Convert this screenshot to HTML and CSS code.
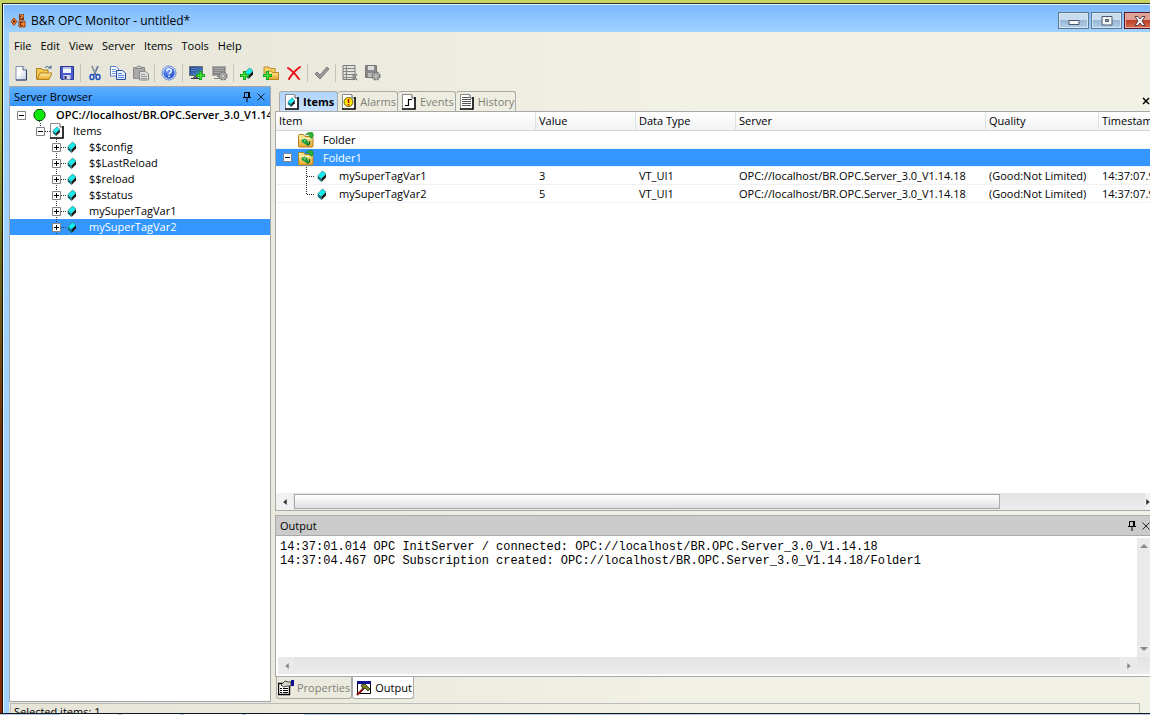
FILE: index.html
```html
<!DOCTYPE html>
<html lang="en">
<head>
<meta charset="utf-8">
<title>B&amp;R OPC Monitor - untitled*</title>
<link rel="stylesheet" href="styles.css">
</head>
<body>
<svg class="defs" aria-hidden="true">
  <defs>
    <linearGradient id="gold" x1="0" y1="0" x2="0" y2="1"><stop offset="0" stop-color="#fff0a0"/><stop offset="1" stop-color="#e5a72c"/></linearGradient>
    <linearGradient id="paper" x1="0" y1="0" x2="1" y2="1"><stop offset="0.4" stop-color="#fff"/><stop offset="1" stop-color="#b9c6e2"/></linearGradient>
    <linearGradient id="screen" x1="0" y1="0" x2="1" y2="1"><stop offset="0" stop-color="#16357c"/><stop offset="1" stop-color="#5aa0dc"/></linearGradient>
    <radialGradient id="ball" cx="0.4" cy="0.3" r="0.8"><stop offset="0" stop-color="#74a4ff"/><stop offset="1" stop-color="#123fba"/></radialGradient>
  </defs>
  <symbol id="cube" viewBox="0 0 10 12">
    <path d="M1 5.500L5.500 1 9 4 4.500 8.500z" fill="#12eef0"/><path d="M1 5.500l3.500 3V12L1 9z" fill="#087f88"/><path d="M4.500 8.500L9 4v3.500L4.500 12z" fill="#1c1c1c"/><path d="M1 5.500L5.500 1 9 4M1 5.500V9" fill="none" stroke="#30777c" stroke-width=".7"/>
  </symbol>
  <symbol id="page" viewBox="0 0 14 16">
    <path d="M1 1h9l3 3v11H1z" fill="#fff"/><path d="M.5 15V.5H10" fill="none" stroke="#8b8b8b"/><path d="M10 1v3h3" fill="none" stroke="#555"/><path d="M13 3v12H0" fill="none" stroke="#000" stroke-width="1.600"/>
  </symbol>
  <symbol id="itempage" viewBox="0 0 14 16"><use href="#page" width="14" height="16"/><use href="#cube" x="2" y="3" width="9" height="10"/></symbol>
  <symbol id="pin" viewBox="0 0 8 10">
    <path d="M1.500 5.500v-5h5v5M0 5.500h8M4 6v4" fill="none" stroke="currentColor"/><path d="M5 0h2v6H5z" fill="currentColor"/>
  </symbol>
  <symbol id="cross" viewBox="0 0 8 8"><path d="M.5.5l7 7M7.500.5l-7 7" fill="none" stroke="currentColor" stroke-width=".8"/></symbol>
  <symbol id="plus" viewBox="0 0 9 9"><path d="M3 0h3v3h3v3H6v3H3V6H0V3h3z" fill="#0c9a1a"/><path d="M4 1h1v3h3v1H5v3H4V5H1V4h3z" fill="#5cf04a" stroke="#35d42e" stroke-width=".7"/></symbol>
  <symbol id="gear" viewBox="0 0 10 10"><circle cx="5" cy="5" r="3.600" fill="#aaa" stroke="#777" stroke-width="2" stroke-dasharray="2 .83"/><circle cx="5" cy="5" r="3" fill="#aaa"/><circle cx="5" cy="5" r="1.400" fill="#eee" stroke="#777" stroke-width=".6"/></symbol>
  <symbol id="folder" viewBox="0 0 16 16">
    <path d="M.5 3.500q0-1 1-1h4l1.500 2H14q1 0 1 1V14q0 1-1 1H1.500q-1 0-1-1z" fill="url(#gold)" stroke="#b87d1c"/>
    <path d="M1 6.500h13.500" stroke="#fff5c0"/><path d="M3.500 8l3-1.500L9 8l2 4-1.500 1.500L4 10z" fill="#169a3c"/><path d="M5 8l2-.5 1 1.500-1 1z" fill="#7fd68a"/><path d="M9 13.500q3.500-1 2.500-4.500" fill="none" stroke="#126f2c" stroke-width="1.300"/><path d="M7.500 3q1.500-3 5-2.500L14 0l1.500 3L14 6.500 11.500 5l.5-1.500Q10 2 7.500 3z" fill="#2fb42f" stroke="#157c24" stroke-width=".6"/>
  </symbol>
  <symbol id="minusbox" viewBox="0 0 9 9"><path d="M.5.5h8v8h-8z" fill="#fff" stroke="#848484"/><path d="M2 4.500h5" stroke="#000"/></symbol>
  <symbol id="branch" viewBox="0 0 14 16">
    <path d="M4.500 0v16M9 8.500h5" fill="none" stroke="#333" stroke-dasharray="1 1"/><path d="M.5 4.500h8v8h-8z" fill="#fff" stroke="#848484"/><path d="M2 8.500h5M4.500 6v5" stroke="#000"/>
  </symbol>
  <symbol id="arrow" viewBox="0 0 5 8"><path d="M5 0v8L0 4z" fill="currentColor"/></symbol>
</svg>

<div class="window">
  <header class="titlebar">
    <svg class="i16" viewBox="0 0 16 16"><path d="M3 5l3 3.500-3 4-3-4z" fill="#e3742d" stroke="#a34a15"/><circle cx="3" cy="8.500" r="1" fill="#402010"/><path d="M8 1h5v6H8z" fill="#7b3511"/><path d="M9 2h3v2h-2v2" fill="none" stroke="#fb9e55"/><path d="M8 8h6v6H8z" fill="#f18a3a" stroke="#984313"/><path d="M12 9.500H9.500v3H12" fill="none" stroke="#612a0b"/></svg>
    <h1 class="title">B&amp;R OPC Monitor - untitled*</h1>
    <div class="winbuttons">
      <button class="winbtn" aria-label="Minimize"><svg width="12" height="8" viewBox="0 0 12 8"><path d="M1 3.500h10v4H1z" fill="#f5f5f5" stroke="#4c566b"/></svg></button>
      <button class="winbtn" aria-label="Maximize"><svg width="12" height="10" viewBox="0 0 12 10"><path d="M1 .5h10v8.500H1z" fill="#f5f5f5" stroke="#4c566b"/><path d="M4.500 3.500h3v2h-3z" fill="#88a8c8" stroke="#4c566b"/></svg></button>
      <button class="winbtn close" aria-label="Close"><svg width="12" height="10" viewBox="0 0 12 10"><path d="M1 .5h3l2 2.500L8 .5h3L8 5l3 4.500H8L6 7 4 9.500H1L4 5z" fill="#f5f5f5" stroke="#563c46"/></svg></button>
    </div>
  </header>

  <div class="client">
    <nav class="menu">
      <button>File</button><button>Edit</button><button>View</button><button>Server</button><button>Items</button><button>Tools</button><button>Help</button>
    </nav>

    <div class="toolbar" role="toolbar">
      <button aria-label="New"><svg class="i16" viewBox="0 0 16 16"><path d="M3 1.500h7l3.500 3.500v10H3z" fill="url(#paper)" stroke="#8290ae"/><path d="M13.500 5v10H3" fill="none" stroke="#2e3c60"/><path d="M10 1.500V5h3.500" fill="#fff" stroke="#46557a"/></svg></button>
      <button aria-label="Open"><svg class="i16" viewBox="0 0 16 16"><path d="M.5 14V3.500h5L7 5h5v9z" fill="#f4c851" stroke="#a87d20"/><path d="M1 14.500L4 8h12l-3 6.500z" fill="url(#gold)" stroke="#b5821c"/><path d="M9 2.500q3-2.500 5 .5" fill="none" stroke="#47688f"/><path d="M12 3.500h3.500V0z" fill="#47688f"/></svg></button>
      <button aria-label="Save"><svg class="i16" viewBox="0 0 16 16"><path d="M1.500 1.500h13v13h-12l-1-1z" fill="#4b5bd0" stroke="#2b318f"/><path d="M4 2h8v6H4z" fill="#f3f5ff"/><path d="M4 2h8v2H4z" fill="#b8c0ee"/><path d="M4.500 10h7v4.500h-7z" fill="#d4d6e2"/><path d="M5.500 11h2v3h-2z" fill="#24266b"/></svg></button>
      <span class="sep"></span>
      <button aria-label="Cut"><svg class="i16" viewBox="0 0 16 16"><path d="M5 1l4 9M11 1L7 10" fill="none" stroke="#62738b" stroke-width="1.700"/><path d="M5.500 1.500l3 6" stroke="#dce5ef" stroke-width=".6"/><ellipse cx="5" cy="12" rx="2" ry="2.500" fill="none" stroke="#2052ba" stroke-width="1.500"/><ellipse cx="11" cy="12" rx="2" ry="2.500" fill="none" stroke="#2052ba" stroke-width="1.500"/></svg></button>
      <button aria-label="Copy"><svg class="i16" viewBox="0 0 16 16"><path d="M.5 1.500H6L8.500 4v7h-8z" fill="#fff" stroke="#577bc0"/><path d="M2 4.500h4M2 6.500h4M2 8.500h4" stroke="#799be0"/><path d="M6.500 5.500h6L15.500 8v6.500h-9z" fill="#e9f1ff" stroke="#244e9c"/><path d="M8 8.500h4M8 10.500h6M8 12.500h6" stroke="#5784d8"/></svg></button>
      <button aria-label="Paste"><svg class="i16" viewBox="0 0 16 16"><path d="M.5 2.500h11v11H.5z" fill="#a9a9a9" stroke="#888"/><path d="M3 3.500V2h2l1-1.500L7 2h2v1.500z" fill="#ddd" stroke="#888"/><path d="M6.500 6.500h6L15.500 9v6h-9z" fill="#ddd" stroke="#888"/><path d="M8 9.500h4M8 11.500h6M8 13.500h6" stroke="#999"/></svg></button>
      <span class="sep"></span>
      <button aria-label="Help"><svg class="i16" viewBox="0 0 16 16"><circle cx="8" cy="8" r="7" fill="#e5eeff" stroke="#6388d4"/><circle cx="8" cy="8" r="5.700" fill="url(#ball)"/><path d="M5.700 6.300q0-2.300 2.300-2.300t2.300 2q0 1.200-1.300 1.800-.9.500-.9 1.500" fill="none" stroke="#fff" stroke-width="1.400"/><circle cx="8" cy="11.300" r=".9" fill="#fff"/></svg></button>
      <span class="sep"></span>
      <button aria-label="Add server"><svg class="i16" viewBox="0 0 16 16"><path d="M.5 1.500h13v9H.5z" fill="url(#screen)" stroke="#64707c"/><path d="M2 3.500h6M2 5.500h4" stroke="#5e86c8"/><path d="M5 11h4v2H4z" fill="#5e6871"/><path d="M2 13.500h9" stroke="#333"/><use href="#plus" x="7" y="6" width="9" height="9"/></svg></button>
      <button aria-label="Server settings"><svg class="i16" viewBox="0 0 16 16"><path d="M.5 1.500h13v9H.5z" fill="#858585" stroke="#aaa"/><path d="M2 3.500h10M2 5.500h10M2 7.500h10" stroke="#a9a9a9"/><path d="M2 13.500h8M5 11.500h3" stroke="#888"/><use href="#gear" x="6" y="6" width="10" height="10"/></svg></button>
      <span class="sep"></span>
      <button aria-label="Add item"><svg class="i16" viewBox="0 0 16 16"><use href="#cube" x="4" y="2" width="10" height="12"/><use href="#plus" x="0" y="6" width="9" height="9"/></svg></button>
      <button aria-label="Add folder"><svg class="i16" viewBox="0 0 16 16"><path d="M1 6V2h5l1 1.500h5V8H1z" fill="#f7d463" stroke="#ba8725"/><path d="M4.500 6h4l1 1.500h6v7h-11z" fill="url(#gold)" stroke="#ba8725"/><use href="#plus" x="0" y="6" width="9" height="9"/></svg></button>
      <button aria-label="Delete"><svg class="i16" viewBox="0 0 16 16"><path d="M2 3q5 3 11 11M14 2Q7 7 3 14" fill="none" stroke="#e81212" stroke-width="2" stroke-linecap="round"/></svg></button>
      <span class="sep"></span>
      <button aria-label="Validate"><svg class="i16" viewBox="0 0 16 16"><path d="M1 9l2-2 3 3 7-8 2 2-9 10z" fill="#999" stroke="#7d7d7d"/></svg></button>
      <span class="sep"></span>
      <button aria-label="Clear log"><svg class="i16" viewBox="0 0 16 16"><path d="M1 .5h12v14H1z" fill="#e3e3df" stroke="#777"/><path d="M1 3.500h12M1 6.500h12M1 9.500h12M1 12.500h12M4.500 0v15" stroke="#858585"/><path d="M10 9l5 6M15 9l-5 6" stroke="#888" stroke-width="1.600"/></svg></button>
      <button aria-label="Log settings"><svg class="i16" viewBox="0 0 16 16"><path d="M.5.5h11v12H.5z" fill="#898989" stroke="#777"/><path d="M3 1h6v4H3z" fill="#ddd"/><path d="M3 8h6v4H3z" fill="#bbb"/><use href="#gear" x="6" y="6" width="10" height="10"/></svg></button>
    </div>

    <div class="workspace">
      <aside class="browser">
        <div class="caption active">
          <h2>Server Browser</h2>
          <button aria-label="Pin"><svg width="8" height="10"><use href="#pin"/></svg></button>
          <button aria-label="Close panel"><svg width="8" height="8"><use href="#cross"/></svg></button>
        </div>
        <ul class="tree" role="tree">
          <li class="node root" role="treeitem"><svg width="9" height="9"><use href="#minusbox"/></svg><svg width="14" height="16" viewBox="0 0 14 16"><path d="M7.500 14v2" stroke="#333" stroke-dasharray="1 1"/><path d="M5 2.500h5L13 6v4l-3 3.500H5L2 10V6z" fill="#0bea0b" stroke="#174e17"/></svg><strong>OPC://localhost/BR.OPC.Server_3.0_V1.14</strong></li>
          <li class="node group" role="treeitem"><svg width="14" height="16" viewBox="0 0 14 16"><path d="M4.500 0v4M9 8.500h5" stroke="#333" stroke-dasharray="1 1"/><path d="M.5 4.500h8v8h-8z" fill="#fff" stroke="#848484"/><path d="M2 8.500h5" stroke="#000"/></svg><svg width="14" height="16"><use href="#itempage"/></svg><span>Items</span></li>
          <li class="node leaf" role="treeitem"><svg width="14" height="16"><use href="#branch"/></svg><svg width="12" height="12"><use href="#cube"/></svg><span>$$config</span></li>
          <li class="node leaf" role="treeitem"><svg width="14" height="16"><use href="#branch"/></svg><svg width="12" height="12"><use href="#cube"/></svg><span>$$LastReload</span></li>
          <li class="node leaf" role="treeitem"><svg width="14" height="16"><use href="#branch"/></svg><svg width="12" height="12"><use href="#cube"/></svg><span>$$reload</span></li>
          <li class="node leaf" role="treeitem"><svg width="14" height="16"><use href="#branch"/></svg><svg width="12" height="12"><use href="#cube"/></svg><span>$$status</span></li>
          <li class="node leaf" role="treeitem"><svg width="14" height="16"><use href="#branch"/></svg><svg width="12" height="12"><use href="#cube"/></svg><span>mySuperTagVar1</span></li>
          <li class="node leaf selected" role="treeitem" aria-selected="true"><svg width="14" height="16"><use href="#branch"/></svg><svg width="12" height="12"><use href="#cube"/></svg><span>mySuperTagVar2</span></li>
        </ul>
      </aside>

      <main class="main">
        <div class="tabrow">
          <div class="tabs" role="tablist">
            <button class="tab current" role="tab" aria-selected="true"><svg width="14" height="16"><use href="#itempage"/></svg>Items</button>
            <button class="tab" role="tab"><svg width="14" height="16" viewBox="0 0 14 16"><use href="#page" width="14" height="16"/><circle cx="6.500" cy="8" r="4.500" fill="#ffea00" stroke="#6a5a00"/><path d="M6.500 5v4M6.500 10v1.500" stroke="#d00" stroke-width="1.600"/></svg>Alarms</button>
            <button class="tab" role="tab"><svg width="14" height="16" viewBox="0 0 14 16"><use href="#page" width="14" height="16"/><path d="M3 11.500h3.500v-6H10" fill="none" stroke="#000" stroke-width="1.200"/></svg>Events</button>
            <button class="tab" role="tab"><svg width="14" height="16" viewBox="0 0 14 16"><use href="#page" width="14" height="16"/><path d="M2 3.500h7M2 5.500h9M2 7.500h9M2 9.500h9M2 11.500h9" stroke="#555"/></svg>History</button>
          </div>
          <button class="tabclose" aria-label="Close view"><svg width="8" height="8" viewBox="0 0 8 8"><path d="M1 1l6 6M7 1L1 7" stroke="#000" stroke-width="1.500"/></svg></button>
        </div>

        <section class="items">
          <div class="tablewrap">
            <table>
              <colgroup><col class="c-item"><col class="c-small"><col class="c-small"><col class="c-server"><col class="c-quality"><col></colgroup>
              <thead><tr><th>Item</th><th>Value</th><th>Data Type</th><th>Server</th><th>Quality</th><th>Timestamp</th></tr></thead>
              <tbody>
                <tr><td><div class="cell folder"><span class="twisty"></span><svg class="i16"><use href="#folder"/></svg>Folder</div></td><td></td><td></td><td></td><td></td><td></td></tr>
                <tr class="selected"><td><div class="cell folder"><svg class="twisty"><use href="#minusbox"/></svg><svg class="i16"><use href="#folder"/></svg>Folder1</div></td><td></td><td></td><td></td><td></td><td></td></tr>
                <tr><td><div class="cell child"><svg width="9" height="18" viewBox="0 0 9 18"><path d="M.5 0v18M1 9.500h8" stroke="#222" stroke-dasharray="1 1"/></svg><svg width="12" height="12"><use href="#cube"/></svg>mySuperTagVar1</div></td><td>3</td><td>VT_UI1</td><td>OPC://localhost/BR.OPC.Server_3.0_V1.14.18</td><td>(Good:Not Limited)</td><td>14:37:07.9</td></tr>
                <tr><td><div class="cell child"><svg width="9" height="18" viewBox="0 0 9 18"><path d="M.5 0v9M1 9.500h8" stroke="#222" stroke-dasharray="1 1"/></svg><svg width="12" height="12"><use href="#cube"/></svg>mySuperTagVar2</div></td><td>5</td><td>VT_UI1</td><td>OPC://localhost/BR.OPC.Server_3.0_V1.14.18</td><td>(Good:Not Limited)</td><td>14:37:07.9</td></tr>
              </tbody>
            </table>
          </div>
          <div class="hscroll">
            <button aria-label="Scroll left"><svg width="4" height="6" viewBox="0 0 5 8"><use href="#arrow"/></svg></button>
            <div class="track"><div class="thumb"></div></div>
            <button class="edge" aria-label="Scroll right"><svg class="flip" width="4" height="6" viewBox="0 0 5 8"><use href="#arrow"/></svg></button>
          </div>
        </section>

        <section class="output">
          <div class="caption">
            <h2>Output</h2>
            <button aria-label="Pin"><svg width="8" height="10"><use href="#pin"/></svg></button>
            <button aria-label="Close panel"><svg width="8" height="8"><use href="#cross"/></svg></button>
          </div>
          <div class="logbody">
            <div class="log"><p>14:37:01.014 OPC InitServer / connected: OPC://localhost/BR.OPC.Server_3.0_V1.14.18</p><p>14:37:04.467 OPC Subscription created: OPC://localhost/BR.OPC.Server_3.0_V1.14.18/Folder1</p></div>
            <div class="vscroll">
              <button aria-label="Scroll up"><svg width="8" height="4" viewBox="0 0 8 4"><path d="M0 4h8L4 0z" fill="#888"/></svg></button>
              <button aria-label="Scroll down"><svg width="8" height="4" viewBox="0 0 8 4"><path d="M0 0h8L4 4z" fill="#888"/></svg></button>
            </div>
          </div>
          <div class="hscroll off">
            <button aria-label="Scroll left"><svg width="4" height="6" viewBox="0 0 5 8"><use href="#arrow"/></svg></button>
            <div class="track"></div>
            <button aria-label="Scroll right"><svg class="flip" width="4" height="6" viewBox="0 0 5 8"><use href="#arrow"/></svg></button>
          </div>
        </section>

        <div class="bottomtabs" role="tablist">
          <button class="btab" role="tab"><svg class="i16" viewBox="0 0 16 16"><path d="M.5 3.500h11v11H.5z" fill="#fff" stroke="#000" stroke-width="1.400"/><path d="M2 8.500h2M5 8.500h5M2 10.500h2M5 10.500h5M2 12.500h2M5 12.500h5" stroke="#000"/><path d="M3 5l4-4 3 1h3v4H9L6 7z" fill="#d8d8c8" stroke="#444"/><path d="M13 0h3v6h-3z" fill="#101090"/></svg>Properties</button>
          <button class="btab current" role="tab" aria-selected="true"><svg class="i16" viewBox="0 0 16 16"><path d="M1.500 1.500h13v12h-13z" fill="#fff" stroke="#000"/><path d="M1 1h14v3H1z" fill="#101090"/><path d="M1 15l7-7" stroke="#8c1010" stroke-width="2.200"/><path d="M5 5l4-1 5 5-2 2-3-3-2 1z" fill="#7e8214" stroke="#222" stroke-width=".8"/></svg>Output</button>
        </div>
      </main>
    </div>

    <footer class="status"><div class="statuscell">Selected items: 1</div></footer>
  </div>
</div>
<div class="taskbar"><span></span><span></span><span></span><span></span></div>
</body>
</html>
```
FILE: styles.css
```css
* { box-sizing: border-box; }

body {
  margin: 0;
  height: 100vh;
  overflow: hidden;
  display: flex;
  flex-direction: column;
  padding-top: 3px;
  background: linear-gradient(#c8d564 0, #b2bd4d 15%, #6c6d20 35%, #74320c 60%, #8a2805 100%);
  font-family: "Open Sans", "Noto Sans", sans-serif;
  font-size: 11px;
  line-height: 16px;
  color: #000;
}

button {
  margin: 0;
  padding: 0;
  border: 0;
  background: none;
  font: inherit;
  color: inherit;
}

h1, h2, p, ul { margin: 0; padding: 0; font-size: inherit; font-weight: normal; }
svg { display: block; flex: none; }
.defs { position: absolute; width: 0; height: 0; }
.i16 { width: 16px; height: 16px; }
.flip { transform: scaleX(-1); }

.window {
  flex: 1;
  min-height: 0;
  margin-left: 2px;
  display: flex;
  flex-direction: column;
  border-top: 1px solid #2a3020;
  border-left: 1px solid #10140c;
  background: #a0d2ff;
  box-shadow: inset 1px 1px 0 #e8f5ff;
}

.titlebar {
  flex: none;
  height: 27px;
  display: flex;
  align-items: center;
  gap: 4px;
  margin: 1px 0 0 1px;
  padding: 4px 0 0 7px;
  overflow: hidden;
  background: linear-gradient(#7cb8fc, #a0d2ff);
}
.title { flex: 1; font-size: 12px; }
.winbuttons { display: flex; gap: 2px; margin-right: -5px; }
.winbtn {
  width: 31px;
  height: 17px;
  display: grid;
  place-items: center;
  border: 1px solid #5f7690;
  background: linear-gradient(#c8dcee 50%, #97b7d4 50%, #b2d0ea);
  box-shadow: inset 0 0 0 1px #d5e6f5;
}
.winbtn.close {
  border-color: #581c26;
  background: linear-gradient(#e0a095 50%, #bd3f26 50%, #d66b50);
  box-shadow: inset 0 0 0 1px #e6a99f;
}

.client {
  flex: 1;
  min-height: 0;
  margin-left: 6px;
  display: flex;
  flex-direction: column;
  background: linear-gradient(90deg, #e5e4d7, #f2f1e5 60%);
}

.menu { flex: none; height: 28px; display: flex; align-items: center; gap: 9px; padding-left: 5px; }

.toolbar { flex: none; height: 26px; display: flex; align-items: center; }
.toolbar button { width: 23px; height: 23px; display: grid; place-items: center; }
.sep { width: 1px; height: 18px; margin: 0 2px; background: #c5c4ba; }

.workspace { flex: 1; min-height: 0; display: flex; gap: 4px; }

.browser {
  flex: none;
  width: 262px;
  display: flex;
  flex-direction: column;
  border: 1px solid #a5a5a5;
  background: #fff;
  overflow: hidden;
}
.caption {
  flex: none;
  height: 20px;
  display: flex;
  align-items: center;
  gap: 6px;
  padding: 0 5px 0 4px;
  border-bottom: 1px solid #aaa;
  background: #cbcbcb;
}
.caption h2 { flex: 1; }
.caption.active { height: 19px; border-bottom: 0; background: linear-gradient(#5fb0ff, #3395fb); }

.tree { list-style: none; padding-top: 1px; }
.node { height: 16px; display: flex; align-items: center; white-space: nowrap; }
.root { padding-left: 7px; }
.root svg + svg { margin: 0 10px 0 6px; }
.root strong { font-weight: 600; }
.group { padding-left: 26px; }
.group span { margin-left: 9px; }
.leaf { padding-left: 42px; }
.leaf span { margin-left: 11px; }
.selected { background: #3397ff; color: #fff; }

.main { flex: 1; min-width: 0; display: flex; flex-direction: column; overflow: hidden; }
.tabrow { flex: none; height: 25px; display: flex; align-items: flex-end; justify-content: space-between; padding-left: 4px; }
.tabs { display: flex; }
.tab {
  height: 20px;
  display: flex;
  align-items: center;
  gap: 4px;
  padding: 0 1px 0 4px;
  border: 1px solid #aaa;
  border-bottom: 0;
  border-radius: 3px 3px 0 0;
  color: #808078;
}
.tab + .tab { border-left: 0; }
.tab.current { background: linear-gradient(#b0d4fb, #c8e2ff); color: #000; font-weight: 700; padding: 0 3px 0 5px; }
.tabclose { height: 21px; padding-top: 1px; overflow: hidden; }

.items {
  flex: 1;
  min-height: 0;
  display: flex;
  flex-direction: column;
  border: 1px solid #a8a8a8;
  border-right: 0;
  background: #fff;
}
.tablewrap { flex: 1; min-height: 0; overflow: hidden; }
table { width: 100%; table-layout: fixed; border-collapse: separate; border-spacing: 0; }
.c-item { width: 260px; }
.c-small { width: 100px; }
.c-server { width: 250px; }
.c-quality { width: 113px; }
th {
  height: 19px;
  padding: 0 0 0 3px;
  border-right: 1px solid #dedfe1;
  border-bottom: 1px solid #d5d5d5;
  background: linear-gradient(#fff, #f1f2f4);
  font-weight: normal;
  text-align: left;
  white-space: nowrap;
  overflow: hidden;
}
td { height: 18px; padding: 0 0 0 3px; border-bottom: 1px solid #f1f1f1; white-space: nowrap; overflow: hidden; line-height: 17px; }
th:last-child { border-right: 0; }
.cell { display: flex; align-items: center; height: 17px; }
.folder { padding-left: 4px; }
.folder .i16 { margin: 0 9px 0 6px; }
.twisty { width: 9px; height: 9px; }
.child { padding-left: 27px; }
.child svg + svg { margin: 0 11px 0 1px; }

.hscroll { flex: none; height: 17px; display: flex; background: linear-gradient(#e3e3e3, #ececec); }
.hscroll button { width: 17px; display: grid; place-items: center; color: #333; background: #f1f1f1; }
.hscroll .edge { width: 5px; }
.track { flex: 1; padding: 1px; display: flex; }
.thumb { width: 83%; border: 1px solid #aaa; background: linear-gradient(#fff, #e0e0e0); }

.output {
  flex: none;
  height: 162px;
  margin-top: 4px;
  display: flex;
  flex-direction: column;
  border: 1px solid #aaa;
  border-right: 0;
  background: #fff;
}
.output .caption { padding-right: 0; }
.logbody { flex: 1; min-height: 0; display: flex; }
.log { flex: 1; padding: 4px; font: 12px/14px "Liberation Mono", monospace; white-space: nowrap; overflow: hidden; }
.vscroll { width: 13px; margin-top: 2px; display: flex; flex-direction: column; justify-content: space-between; padding: 6px 0; align-items: center; background: #eaeaea; }
.output .hscroll { margin: 0 0 2px 2px; padding-right: 13px; }
.off button { color: #888; background: #eaeaea; }

.bottomtabs { flex: none; height: 25px; display: flex; align-items: flex-start; padding-left: 1px; }
.btab {
  height: 22px;
  display: flex;
  align-items: center;
  gap: 3px;
  padding: 1px 1px 0;
  border: 1px solid #aaa;
  border-top: 0;
  border-radius: 0 0 3px 3px;
  color: #808078;
}
.btab.current { padding-left: 3px; background: #fff; color: #000; }

.status { flex: none; height: 11px; padding: 1px 10px 0 1px; overflow: hidden; }
.statuscell { height: 20px; border: 1px solid #bbb; padding-left: 3px; }

.taskbar { flex: none; height: 2px; display: flex; gap: 4px; padding-left: 60px; border-top: 1px solid #111a24; background: #b6cbe6; }
.taskbar span { width: 58px; background: #fff; }
```
